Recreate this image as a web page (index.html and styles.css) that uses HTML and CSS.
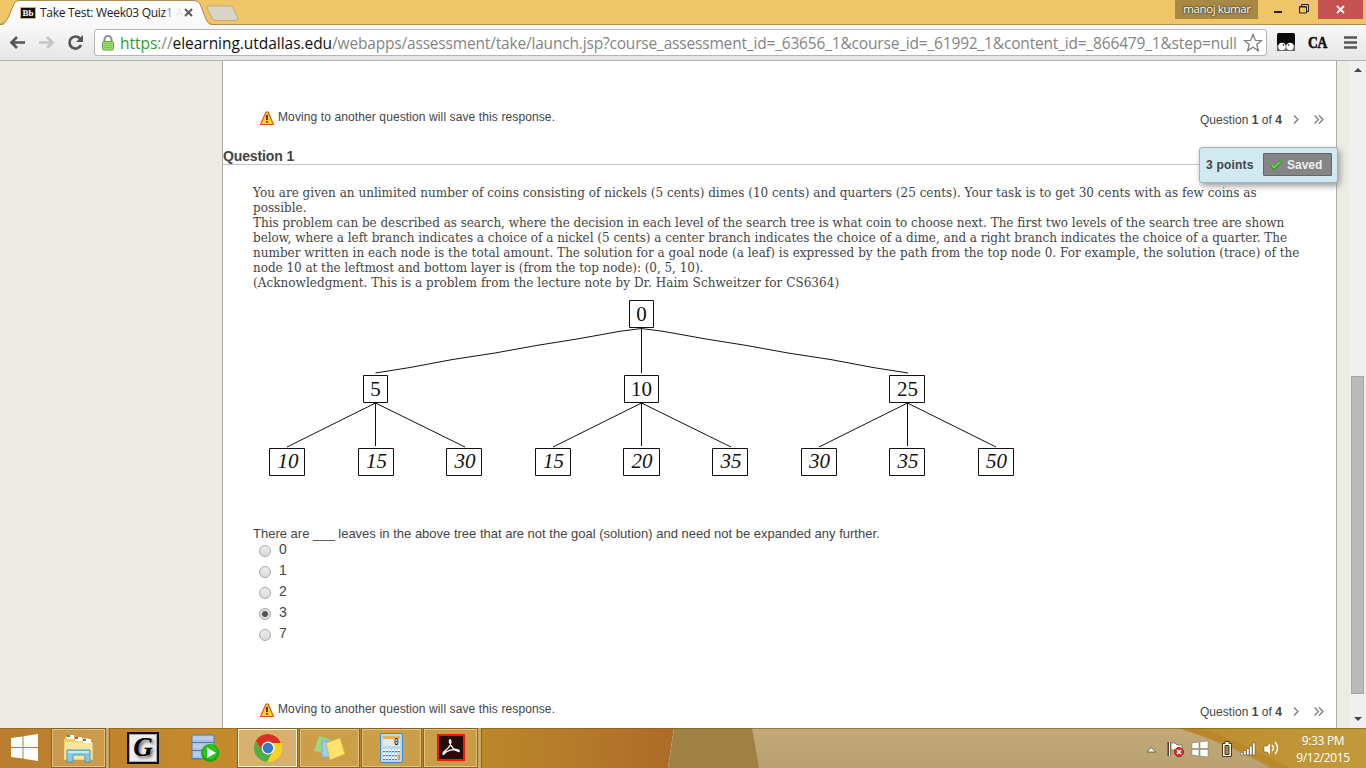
FILE: index.html
```html
<!DOCTYPE html>
<html lang="en">
<head>
<meta charset="utf-8">
<title>Take Test: Week03 Quiz1</title>
<link rel="stylesheet" href="styles.css">
</head>
<body>
<header class="tabstrip">
  <svg class="tab-shapes" width="260" height="27" viewBox="0 0 260 27">
    <defs><linearGradient id="tabfill" x2="0" y2="1"><stop offset="0" stop-color="#fff"/><stop offset="1" stop-color="#f8f8f8"/></linearGradient></defs>
    <path d="M0 25.500Q5 25 8 19L14 4Q15 .5 19 .5H194Q198 .5 200 4L206 20Q208 25 214 25.500V27H0Z" fill="url(#tabfill)"/>
    <path d="M0 24.500Q5 24 8 18L14 4Q15 .5 19 .5H194Q198 .5 200 4L206 19Q208 24.500 214 24.500H260" fill="none" stroke="#ab8b4c"/>
    <path d="M209 6H229Q232 6 233 8L238 18Q238 20.500 235 20.500H217Q213 20.500 212 18L207 8Q206.500 6 209 6Z" fill="#d8d4c6" stroke="#b9aa81"/>
  </svg>
  <div class="tab">
    <span class="favicon">Bb</span><span class="tab-title">Take Test: Week03 Quiz<i class="dim">1</i> <i class="faint">A</i></span>
    <svg class="tab-close" width="9" height="9" viewBox="0 0 9 9"><path d="M1 1L8 8M8 1L1 8" stroke="#555" stroke-width="1.800"/></svg>
  </div>
  <div class="window-controls">
    <span class="profile">manoj kumar</span>
    <svg class="win-icons" width="60" height="19" viewBox="0 0 60 19"><path d="M16 11H24V13H16Z" fill="#222"/><path d="M41.500 6.500H48.500V13H41.500ZM43.500 6V4.500H50.500V11.500H49M41.500 7H48.500" fill="none" stroke="#222"/></svg>
    <span class="close-win"><svg width="9" height="9" viewBox="0 0 9 9"><path d="M1 1L8 8M8 1L1 8" stroke="#fff" stroke-width="1.800"/></svg></span>
  </div>
</header>
<nav class="toolbar">
  <svg class="nav-icons" width="95" height="34" viewBox="0 0 95 34">
    <path d="M25 15.500H12M17 10L11.500 15.500L17 21" fill="none" stroke="#555" stroke-width="2.700"/>
    <path d="M39 15.500H52M47 10L52.500 15.500L47 21" fill="none" stroke="#c5c5c5" stroke-width="2.700"/>
    <path d="M80 11.500A6 6 0 1 0 81 18" fill="none" stroke="#555" stroke-width="2.700"/><path d="M83 8V15H76Z" fill="#555"/>
  </svg>
  <div class="omnibox">
    <svg class="lock" width="12" height="16" viewBox="0 0 12 16"><path d="M2.500 8V4.500A3.500 3.500 0 0 1 9.500 4.500V8" fill="none" stroke="#909090" stroke-width="2"/><rect x=".5" y="6.500" width="11" height="8.500" rx="1" fill="#9edb72" stroke="#5fa84b"/><path d="M2 8.500H10M2 10.500H10M2 12.500H10" stroke="#79c356"/></svg>
    <span class="url"><b>https</b><em>://</em><strong>elearning.utdallas.edu</strong><em class="path">/webapps/assessment/take/launch.jsp?course_assessment_id=_63656_1&amp;course_id=_61992_1&amp;content_id=_866479_1&amp;step=null</em></span>
    <svg class="star" width="20" height="20" viewBox="0 0 20 20"><path d="M10 1.500L12.300 7.300L18.500 7.700L13.700 11.500L15.300 17.600L10 14.200L4.700 17.600L6.300 11.500L1.500 7.700L7.700 7.300Z" fill="#fff" stroke="#777" stroke-width="1.200"/></svg>
  </div>
  <div class="extensions">
    <svg width="18" height="18" viewBox="0 0 18 18"><rect width="18" height="18" rx="1.500" fill="#0a0a0a"/><path d="M0 12H18V16.500Q18 18 16 18H2Q0 18 0 16.500Z" fill="#666"/><circle cx="5" cy="13.500" r="3.700" fill="#fff"/><circle cx="13" cy="13.500" r="3.700" fill="#fff"/><circle cx="6.500" cy="12" r=".8"/><circle cx="11.500" cy="12" r=".8"/></svg>
    <span class="ca">CA</span>
    <svg class="burger" width="13" height="13" viewBox="0 0 13 13"><path d="M0 1.500H13M0 6.500H13M0 11.500H13" stroke="#555" stroke-width="2.500"/></svg>
  </div>
</nav>
<main class="viewport">
  <section class="page">
    <div class="save-row first">
      <svg class="warn" width="14" height="14" viewBox="0 0 14 14"><path d="M6 1H8L13.500 13.500H.5Z" fill="#ffd22e" stroke="#ee4b18" stroke-linejoin="round" stroke-width="1.200"/><path d="M6.200 4H7.800V9H6.200ZM6.200 10.200H7.800V11.800H6.200Z" fill="#222"/></svg>
      <span class="moving">Moving to another question will save this response.</span>
      <span class="pager">Question <b>1</b> of <b>4</b></span>
      <svg class="arrows" width="34" height="9" viewBox="0 0 34 9"><path d="M1 .5L5 4.500L1 8.500M21.500 .5L25.500 4.500L21.500 8.500M26 .5L30 4.500L26 8.500" fill="none" stroke="#777" stroke-width="1.200"/></svg>
    </div>
    <div class="question-head">
      <h1>Question 1</h1>
      <aside class="points"><span>3 points</span><button class="saved"><svg width="12" height="10" viewBox="0 0 12 10"><path d="M1 5L4 8.500L11 1.500" fill="none" stroke="#2b9a23" stroke-width="3"/><path d="M1.500 5L4 7.800L10.500 1.800" fill="none" stroke="#6ee04d" stroke-width="1.500"/></svg><span>Saved</span></button></aside>
    </div>
    <div class="prompt">
      <p class="l1">You are given an unlimited number of coins consisting of nickels (5 cents) dimes (10 cents) and quarters (25 cents). Your task is to get 30 cents with as few coins as</p>
      <p class="l2">possible.</p>
      <p class="l3">This problem can be described as search, where the decision in each level of the search tree is what coin to choose next. The first two levels of the search tree are shown</p>
      <p class="l4">below, where a left branch indicates a choice of a nickel (5 cents) a center branch indicates the choice of a dime, and a right branch indicates the choice of a quarter. The</p>
      <p class="l5">number written in each node is the total amount. The solution for a goal node (a leaf) is expressed by the path from the top node 0. For example, the solution (trace) of the</p>
      <p class="l6">node 10 at the leftmost and bottom layer is (from the top node): (0, 5, 10).</p>
      <p class="l7">(Acknowledgment. This is a problem from the lecture note by Dr. Haim Schweitzer for CS6364)</p>
    </div>
    <svg class="tree" width="780" height="190" viewBox="253 295 780 190">
      <g class="edges">
        <path d="M641.500 328.500L620 331.300L577 339L537 345.400L495 353L452 359.600L410 367.500L375.500 373M641.500 328V373M641.500 328.500L663 331.300L706 339L746 345.400L788 353L831 359.600L873 367.500L908 373"/>
        <path d="M375.500 403L287 447M375.500 403V446M375.500 403L465 447M641.500 403L553 447M641.500 403V446M641.500 403L731 447M907.500 403L819 447M907.500 403V446M907.500 403L996 447"/>
      </g>
      <g class="boxes">
        <path d="M629.500 300.500h24v27h-24zM363.500 375.500h24v27h-24zM624.500 375.500h34v27h-34zM889.500 375.500h35v27h-35z"/>
        <path d="M269.500 448.500h35v27h-35zM358.500 448.500h35v27h-35zM446.500 448.500h35v27h-35zM535.500 448.500h35v27h-35zM623.500 448.500h36v27h-36zM712.500 448.500h35v27h-35zM801.500 448.500h35v27h-35zM889.500 448.500h35v27h-35zM978.500 448.500h35v27h-35z"/>
      </g>
      <g class="node">
        <text x="641.500" y="321">0</text><text x="375.500" y="396">5</text><text x="641.500" y="396">10</text><text x="907.500" y="396">25</text>
      </g>
      <g class="node leaf">
        <text x="288" y="468">10</text><text x="376.500" y="468">15</text><text x="465" y="468">30</text><text x="553.500" y="468">15</text><text x="642" y="468">20</text><text x="731" y="468">35</text><text x="819.500" y="468">30</text><text x="908" y="468">35</text><text x="996.500" y="468">50</text>
      </g>
    </svg>
    <p class="ask">There are ___ leaves in the above tree that are not the goal (solution) and need not be expanded any further.</p>
    <ul class="answers">
      <li><i class="radio"></i>0</li><li><i class="radio"></i>1</li><li><i class="radio"></i>2</li><li><i class="radio on"></i>3</li><li><i class="radio"></i>7</li>
    </ul>
    <div class="save-row last">
      <svg class="warn" width="14" height="14" viewBox="0 0 14 14"><path d="M6 1H8L13.500 13.500H.5Z" fill="#ffd22e" stroke="#ee4b18" stroke-linejoin="round" stroke-width="1.200"/><path d="M6.200 4H7.800V9H6.200ZM6.200 10.200H7.800V11.800H6.200Z" fill="#222"/></svg>
      <span class="moving">Moving to another question will save this response.</span>
      <span class="pager">Question <b>1</b> of <b>4</b></span>
      <svg class="arrows" width="34" height="9" viewBox="0 0 34 9"><path d="M1 .5L5 4.500L1 8.500M21.500 .5L25.500 4.500L21.500 8.500M26 .5L30 4.500L26 8.500" fill="none" stroke="#777" stroke-width="1.200"/></svg>
    </div>
  </section>
  <div class="scrollbar"><i class="up"></i><i class="thumb"></i><i class="down"></i></div>
</main>
<footer class="taskbar">
  <svg class="wallpaper" width="1366" height="40" viewBox="0 0 1366 40">
    <defs>
      <linearGradient id="wa"><stop offset="0" stop-color="#b97d30"/><stop offset=".3" stop-color="#c48a2b"/><stop offset=".72" stop-color="#bb8729"/><stop offset=".86" stop-color="#b47a2a"/><stop offset="1" stop-color="#ac6b28"/></linearGradient>
      <linearGradient id="wb" x2="0" y2="1"><stop offset="0" stop-color="#c3a977"/><stop offset="1" stop-color="#b9a173"/></linearGradient>
      <linearGradient id="wc"><stop offset="0" stop-color="#bc8c2e"/><stop offset="1" stop-color="#c29a3a"/></linearGradient>
    </defs>
    <path d="M0 0H674L668 40H0Z" fill="url(#wa)"/>
    <path d="M751 0H1366V40H758Z" fill="url(#wb)"/>
    <path d="M674 0H752L759 40H668Z" fill="#a18043"/>
    <path d="M1178 0H1366V40H1275Q1238 18 1178 0Z" fill="url(#wc)"/><path d="M1178 0Q1235 19 1270 40H1290Q1243 15 1200 0Z" fill="#b98325" opacity=".7"/>
    <path d="M0 .5H1366" stroke="#806023" opacity=".65"/>
  </svg>
  <div class="apps">
    <div class="app start"><svg width="28" height="28" viewBox="0 0 28 28"><path d="M0 4L11.500 2.500V13H0ZM12.500 2.300L27 0V13H12.500ZM0 14H11.500V24.500L0 23ZM12.500 14H27V27L12.500 24.700Z" fill="#fff"/></svg></div>
    <div class="app running explorer"><svg width="34" height="32" viewBox="0 0 34 32"><path d="M4 4H11L13 6H26L28 10L31 11V28H2V8Z" fill="#edcf72"/><path d="M3 10H30V27H2Z" fill="#f7e59b"/><path d="M5 3h7v4H5ZM13 5h7v4h-7ZM21 7h8v4h-8Z" fill="#fff"/><path d="M5 3h3v2H5Z" fill="#24ad2b"/><path d="M13 5h3v2h-3Z" fill="#e24b32"/><path d="M21 7h3v2h-3Z" fill="#278ce3"/><path d="M5 18H28V30H23V23H11V30H5Z" fill="#87c9e8" stroke="#4c98be"/><path d="M6 19H27V21H6Z" fill="#c3eaf7"/></svg></div>
    <div class="app"><span class="g-icon">G</span></div>
    <div class="app"><svg width="28" height="30" viewBox="0 0 28 30"><path d="M1 2H23V26H1Z" fill="#a8c0e0" stroke="#507fc1"/><path d="M2 5H22M2 13.500H22M2 21.500H22" stroke="#b9cde8" stroke-width="4"/><path d="M1 9.500H23M1 17.500H23M1 25.500H23" stroke="#507fc1"/><circle cx="19" cy="20" r="9" fill="#16a713"/><circle cx="19" cy="19" r="7.500" fill="#24c51c"/><path d="M16 14.500L25 20L16 25Z" fill="#fff"/></svg></div>
    <div class="app running chrome"><svg width="28" height="28" viewBox="0 0 28 28"><circle cx="14" cy="14" r="14" fill="#ffd21f"/><path d="M14 0A14 14 0 0 0 1.800 7L8 17L14 9H27A14 14 0 0 0 14 0Z" fill="#dc2d27"/><path d="M1.800 7A14 14 0 0 0 13 28L19 17L14 20L8 17Z" fill="#52ad45"/><circle cx="14" cy="14" r="6.500" fill="#fff"/><circle cx="14" cy="14" r="5.200" fill="#357bc4"/></svg></div>
    <div class="app running notes"><svg width="32" height="27" viewBox="0 0 32 27"><path d="M5 1L18 5L14 19L0 16Z" fill="#9bd681"/><path d="M8 6H22V22H8Z" fill="#9fcef4" stroke="#75afe0"/><path d="M12 8L26 3L31 19L16 25Z" fill="#ffe36c" stroke="#e2b83a"/></svg></div>
    <div class="app running calc"><svg width="24" height="30" viewBox="0 0 24 30"><rect x=".5" y=".5" width="22" height="29" rx="1.500" fill="#b9d9f3" stroke="#4b89bd"/><path d="M3 3H20V6H3Z" fill="#f4ae42"/><path d="M3 6H20V13H3Z" fill="#ddebf0"/><text class="calc-digit" x="14" y="12">0</text><path d="M3 17.500H20M3 21.500H17M3 25.500H17" stroke="#fff" stroke-width="3" stroke-dasharray="2 1"/><path d="M3 18.500H20M3 22.500H17M3 26.500H17" stroke="#477fad" stroke-dasharray="2 1"/><path d="M18 22H20V27H18Z" fill="#f39823"/></svg></div>
    <div class="app running adobe"><svg width="28" height="28" viewBox="0 0 28 28"><path d="M1 1H27V26H1Z" fill="#280b0b" stroke="#ef1a0b" stroke-width="2"/><path d="M6 20C5 17 13 16 14 8C14 5 12 5 12.500 8C14 13 18 17 22 17.500C24 15 14 14.500 9 18C7 20 6 21 6 20Z" fill="none" stroke="#fff" stroke-width="1.300"/></svg></div>
  </div>
  <div class="tray">
    <svg width="125" height="20" viewBox="1145 738 125 20">
      <path d="M1147 752L1151 747.500L1156 752Z" fill="#fff" stroke="#76694e"/>
      <path d="M1169 742V756" stroke="#4b4130" stroke-width="3"/><path d="M1169.500 742V756" stroke="#fff"/><path d="M1171 743H1175L1177 745H1182V752H1177L1175 750H1171Z" fill="#fff" stroke="#6b5a3b" stroke-width=".7"/><circle cx="1179" cy="752" r="4.500" fill="#db3434" stroke="#a91c1c"/><path d="M1177 750L1181 754M1181 750L1177 754" stroke="#fff" stroke-width="1.600"/>
      <path d="M1192 743L1199 742V748.500H1192ZM1200 741.800L1208 741V748.500H1200ZM1192 749.500H1199V756L1192 755ZM1200 749.500H1208V757L1200 756Z" fill="#fff" stroke="#6b5a3b" stroke-width=".4"/>
      <path d="M1222.500 743.500H1225V741.500H1229V743.500H1231.500V756.500H1222.500Z" fill="#fff" stroke="#4b3818"/><path d="M1225 745.500H1229V754.500H1225Z" fill="#ad8843" stroke="#4b3818"/>
      <path d="M1240.500 755V752.500h2.500V755zM1243.500 755V750.500h2.500V755zM1246.500 755V748.500h2.500V755zM1249.500 755V746h2.500V755zM1252.500 755V743h2.500V755z" fill="#fff" stroke="#5b451e" stroke-width=".5"/>
      <path d="M1264 746H1267L1271 742V756L1267 752H1264Z" fill="#fff" stroke="#5b451e" stroke-width=".5"/>
    </svg>
    <svg class="waves" width="9" height="16" viewBox="0 0 9 16"><path d="M1 5Q4 8 1 11M4 2Q9 8 4 14" fill="none" stroke="#fff" stroke-width="1.400"/></svg>
    <div class="clock"><span class="time">9:33 PM</span><span class="date">9/12/2015</span></div>
  </div>
</footer>
</body>
</html>
```
FILE: styles.css
```css
* { box-sizing: border-box; }
html, body { margin: 0; height: 768px; overflow: hidden; }
body { display: flex; flex-direction: column; background: #fff; font-family: "Liberation Sans", Arial, sans-serif; color: #444; }
p, h1, ul { margin: 0; padding: 0; }
svg { display: block; flex: none; }
.tabstrip { position: relative; height: 25px; flex: none; background: #f0c568; display: flex; justify-content: space-between; z-index: 2; border-bottom: 1px solid #ab8b4c; }
.tab-shapes { position: absolute; left: 0; top: 0; }
.tab { position: relative; display: flex; align-items: center; height: 25px; padding-left: 20px; }
.favicon { width: 16px; height: 12px; background: #111; border: 1px solid #d6ae6b; color: #fff; font: bold 9px/10px "Liberation Serif", serif; text-align: center; }
.tab-title { width: 144px; margin-left: 4px; font: 12px "Open Sans", sans-serif; letter-spacing: -.28px; color: #222; white-space: nowrap; }
.tab-title i { font-style: normal; }
.dim { color: #999; }
.faint { color: #e8e8e8; }
.window-controls { display: flex; height: 19px; padding-right: 3px; }
.profile { width: 83px; padding-left: 1px; background: #a78945; color: #fff; font: 11.500px/18px "Open Sans", sans-serif; letter-spacing: -.4px; text-align: center; text-shadow: 0 0 2px #332, 0 0 2px #332; }
.close-win { width: 45px; height: 19px; background: #c75050; display: flex; align-items: center; justify-content: center; }
.toolbar { height: 36px; flex: none; display: flex; background: linear-gradient(#f8f8f8, #e6e6e6); border-bottom: 1px solid #b5b5b5; padding-top: 2px; }
.omnibox { width: 1173px; height: 27px; margin-top: 2px; margin-left: -1px; border: 1px solid #b5b5b5; border-radius: 3px; background: #fff; display: flex; align-items: center; }
.lock { margin-left: 7px; }
.url { width: 1121px; margin-left: 6px; font: 15.500px/24px "Open Sans", sans-serif; letter-spacing: -.04px; white-space: nowrap; }
.url b, .url em, .url strong { font-weight: 400; font-style: normal; }
.url b { color: #2f9d2c; }
.url em { color: #858585; }
.url strong { color: #111; }
.url .path { letter-spacing: -.18px; }
.star { margin-left: 2px; }
.extensions { flex: 1; display: flex; padding-left: 10px; }
.extensions svg { margin-top: 6px; }
.ca { width: 20px; margin: 6px 0 0 13px; color: #111; font: bold 17px/20px "Liberation Serif", serif; letter-spacing: -.5px; transform: scaleX(.8); transform-origin: left; -webkit-text-stroke: .6px #111; }
.extensions .burger { margin: 9px 0 0 16px; }
.viewport { height: 667px; flex: none; display: flex; overflow: hidden; background: #eeebe4; }
.page { width: 1115px; margin-left: 222px; height: 667px; background: #fff; border: solid #aaa; border-width: 0 1px; }
.save-row { display: flex; height: 14px; padding-left: 37px; align-items: flex-start; font-size: 12px; line-height: 14px; }
.first { margin-top: 49px; }
.warn { margin-top: 1px; }
.moving { width: 300px; margin-left: 4px; letter-spacing: .11px; white-space: nowrap; }
.pager { margin: 3px 0 0 622px; width: 93px; letter-spacing: .04px; white-space: nowrap; }
.arrows { margin-top: 5px; }
.question-head { display: flex; justify-content: space-between; height: 41px; border-bottom: 1px solid #c5c5c5; }
.question-head h1 { margin-top: 24px; font-size: 14px; line-height: 16px; letter-spacing: -.12px; height: 16px; }
.points { position: relative; z-index: 3; width: 139px; height: 36px; margin: 23px -2px 0 0; padding: 0 5px 1px 6px; background: #d1e9f0; border: 1px solid #a2b2b7; border-radius: 3px; box-shadow: 2px 3px 6px #999; display: flex; align-items: center; justify-content: space-between; font: bold 12px "Liberation Sans", sans-serif; letter-spacing: .2px; }
.saved { width: 69px; height: 23px; border: 1px solid #666; border-radius: 1px; background: #858585; color: #eee; display: flex; align-items: center; padding: 0 6px; gap: 5px; font: bold 12px "Liberation Sans", sans-serif; }
.prompt { margin: 21px 0 0 30px; height: 105px; }
.prompt p { height: 15px; font: 12px/15px "DejaVu Serif", serif; white-space: nowrap; }
.prompt .l1 { letter-spacing: .018px; }
.prompt .l3 { letter-spacing: -.03px; }
.prompt .l4 { letter-spacing: -.018px; }
.prompt .l5 { letter-spacing: .015px; }
.prompt .l6 { letter-spacing: -.03px; }
.prompt .l7 { letter-spacing: .045px; }
.tree { margin: 4px 0 0 30px; }
.edges path, .boxes path { fill: none; stroke: #111; stroke-width: 1; }
.node { font: 21px "Liberation Serif", serif; fill: #111; text-anchor: middle; }
.leaf { font-style: italic; }
.calc-digit { font: 8px "DejaVu Sans Mono", monospace; }
.ask { margin: 41px 0 0 30px; font-size: 13px; line-height: 15px; white-space: nowrap; }
.answers { list-style: none; padding-left: 36px; margin-top: 1px; }
.answers li { height: 21px; display: flex; font-size: 14px; line-height: 15px; gap: 8px; }
.radio { width: 12px; height: 12px; margin-top: 3px; border-radius: 50%; border: 1px solid #aaa; background: linear-gradient(#eee, #d9d9d9); }
.on { background: radial-gradient(circle, #555 0 2.500px, #ddd 3.500px); }
.last { margin-top: 55px; }
.scrollbar { width: 17px; margin-left: 12px; background: #f0f0f0; display: flex; flex-direction: column; align-items: center; }
.up { margin-top: 7px; border: solid transparent; border-width: 0 4px 4px; border-bottom-color: #444; }
.thumb { width: 13px; height: 318px; margin-top: 304px; background: #bababa; border: 1px solid #a5a5a5; }
.down { margin-top: 23px; border: solid transparent; border-width: 4px 4px 0; border-top-color: #444; }
.taskbar { height: 40px; flex: none; position: relative; display: flex; justify-content: space-between; }
.wallpaper { position: absolute; left: 0; top: 0; }
.apps, .tray { position: relative; display: flex; }
.app { height: 40px; display: flex; align-items: center; justify-content: center; }
.apps .app:nth-child(1) { width: 51px; padding-right: 2px; }
.running { background: rgba(235, 207, 145, .3); border: 1px solid #876023; box-shadow: inset 0 0 0 1px rgba(255, 239, 198, .45); }
.explorer { width: 55px; margin-right: 4px; box-shadow: inset 0 0 0 1px rgba(255, 239, 198, .45), 3px 0 0 #cda76a, 4px 0 0 #876023; }
.apps .app:nth-child(3) { width: 66px; }
.apps .app:nth-child(4) { width: 61px; padding-right: 4px; }
.chrome { width: 61px; background: rgba(235, 216, 174, .5); box-shadow: inset 0 0 0 1px #fff2d8; }
.notes { width: 61px; margin-left: 1px; }
.calc { width: 61px; margin: 0 1px; }
.adobe { width: 55px; margin-right: 4px; box-shadow: inset 0 0 0 1px rgba(255, 239, 198, .45), 3px 0 0 #cda76a, 4px 0 0 #876023; }
.g-icon { width: 32px; height: 32px; background: #eee; border: 2px solid #111; box-shadow: inset 0 0 0 1px #aaa; color: #000; font: italic bold 27px/27px "Liberation Serif", serif; text-align: center; text-shadow: 2px 2px 3px #666; }
.tray { align-items: flex-start; }
.tray > svg { margin-top: 10px; }
.tray > .waves { margin: 12px 0 0 1px; }
.clock { width: 86px; height: 40px; padding: 4px 0 0 0; display: flex; flex-direction: column; align-items: center; color: #fff; font: 12px/17px "Open Sans", sans-serif; letter-spacing: -.35px; }
```
